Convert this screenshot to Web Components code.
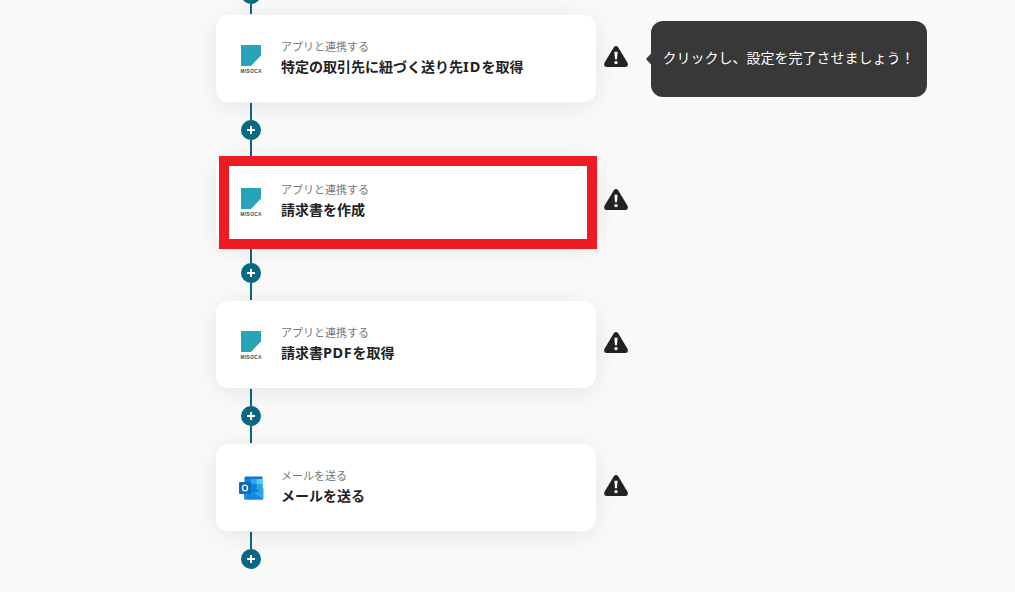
<!DOCTYPE html>
<html lang="ja">
<head>
<meta charset="utf-8">
<title>フロー</title>
<style>
html,body{margin:0;height:100%;overflow:hidden;background:#fafafa}
body{font-family:"Noto Sans","Noto Sans CJK JP",sans-serif;color:#222}
.latin{font-size:14.5px;letter-spacing:.6px;line-height:1}
.latin.id{letter-spacing:1.1px}
</style>
</head>
<body>
<flow-board>
  <flow-link first></flow-link>
  <flow-step app="アプリと連携する"><misoca-logo slot="icon"></misoca-logo>特定の取引先に紐づく送り先<span class="latin id">ID</span>を取得<tool-tip slot="tip">クリックし、設定を完了させましょう！</tool-tip></flow-step>
  <flow-link></flow-link>
  <flow-step app="アプリと連携する" marked><misoca-logo slot="icon"></misoca-logo>請求書を作成</flow-step>
  <flow-link></flow-link>
  <flow-step app="アプリと連携する"><misoca-logo slot="icon"></misoca-logo>請求書<span class="latin">PDF</span>を取得</flow-step>
  <flow-link></flow-link>
  <flow-step app="メールを送る"><outlook-logo slot="icon"></outlook-logo>メールを送る</flow-step>
  <flow-link last></flow-link>
</flow-board>
<script>
function define(name, html) {
  const t = document.createElement('template');
  t.innerHTML = html;
  customElements.define(name, class extends HTMLElement {
    constructor() {
      super();
      this.attachShadow({mode: 'open'}).append(t.content.cloneNode(true));
    }
    connectedCallback() {
      const label = this.shadowRoot.querySelector('.app');
      if (label) label.textContent = this.getAttribute('app');
    }
  });
}

define('flow-board', `<style>
:host{display:flex;flex-direction:column;gap:1px;margin:-26px 0 0 216px;width:720px}
</style><slot></slot>`);

define('flow-link', `<style>
:host{display:flex;flex-direction:column;align-items:center;width:20px;height:54px;margin-left:25px}
:host([first]){height:40px}
i{flex:1;width:2px;background:#096882}
:host([last]) i:last-child{visibility:hidden}
svg{display:block;flex:none}
</style><i></i><svg width="20" height="20" viewBox="0 0 20 20"><circle cx="10" cy="10" r="10" fill="#096882"/><path d="M10 6v8M6 10h8" stroke="#fff" stroke-width="2"/></svg><i></i>`);

define('flow-step', `<style>
:host{display:flex;align-items:center;height:87px;position:relative}
.card{display:flex;align-items:center;width:380px;height:87px;box-sizing:border-box;padding-left:21px;background:#fff;border-radius:12px;box-shadow:0 4px 28px rgba(0,0,0,.09)}
.icon{display:flex;width:28px;justify-content:center;margin-right:16px}
.app{font-size:11px;line-height:18px;color:#777}
.title{font-size:14px;line-height:22px;height:22px;font-weight:700;white-space:nowrap}
.text{padding-bottom:1px}
.warn{display:block;margin:-4px 0 0 8px;flex:none}
.mark{display:none;position:absolute;left:3px;top:-2px;width:358px;height:73px;border:10px solid #ed1c24}
:host([marked]) .mark{display:block}
</style>
<div class="card"><div class="icon"><slot name="icon"></slot></div><div class="text"><div class="app"></div><div class="title"><slot></slot></div></div></div>
<svg class="warn" width="24" height="21" viewBox="0 0 24 22" preserveAspectRatio="none"><path d="M9.700 1.500Q12-1.300 14.300 1.500L23.500 17.600Q24.800 21.600 21.400 22H2.600Q-.8 21.600.5 17.600Z" fill="#222"/><path d="M10.400 6h3.200L13 14h-2z" fill="#fff"/><circle cx="12" cy="17.300" r="1.700" fill="#fff"/></svg>
<slot name="tip"></slot><div class="mark"></div>`);

define('tool-tip', `<style>
:host{display:flex;align-items:center;position:relative;box-sizing:border-box;width:276px;height:76px;margin-left:23px;padding:0 0 2px 11.500px;border-radius:12px;background:#383838;color:#fff;font-size:14px;line-height:20px;white-space:nowrap}
svg{position:absolute;left:-5px;top:32px}
</style><svg width="6" height="12" viewBox="0 0 6 12"><path d="M5.500 0 0 6l5.500 6z" fill="#383838"/></svg><slot></slot>`);

define('misoca-logo', `<style>:host,svg{display:block}</style>
<svg width="28" height="30" viewBox="0 0 28 30"><path d="M4 1h20v10.500L14 22H4z" fill="#29a3b7"/><text x="3.600" y="28.900" font-family="Liberation Sans" font-weight="700" font-size="4.800" letter-spacing=".35" fill="#444">MISOCA</text></svg>`);

define('outlook-logo', `<style>:host{display:block;padding-left:1px}svg{display:block}</style>
<svg width="28" height="28" viewBox="0 0 28 28"><path d="M7.500 2.500h16q1 0 1 1V18h-18V3.500q0-1 1-1z" fill="#1078cf"/><path d="M7 5h6v5H7z" fill="#1482d8"/><path d="M12.500 5h6v5h-6z" fill="#28a8ea"/><path d="M18.500 5h6v5h-6z" fill="#50d0fa"/><path d="M12.500 10h6v9h-6z" fill="#0d7fd8"/><path d="M18.500 10h6v6h-6z" fill="#28a8ea"/><path d="M6 18h19v7.500H7.500Q6 25.500 6 24z" fill="#1f97e4"/><path d="M25.500 14v11L16.500 19.500z" fill="#2aa6ec"/><path d="M12 17 25 25q-.5.500-1.500.5H6.500z" fill="#1687dc"/><rect x="1" y="8" width="12" height="12" rx="1" fill="#0d68c4"/><ellipse cx="7" cy="14" rx="2.500" ry="2.900" fill="none" stroke="#fff" stroke-width="1.400"/></svg>`);
</script>
</body>
</html>
